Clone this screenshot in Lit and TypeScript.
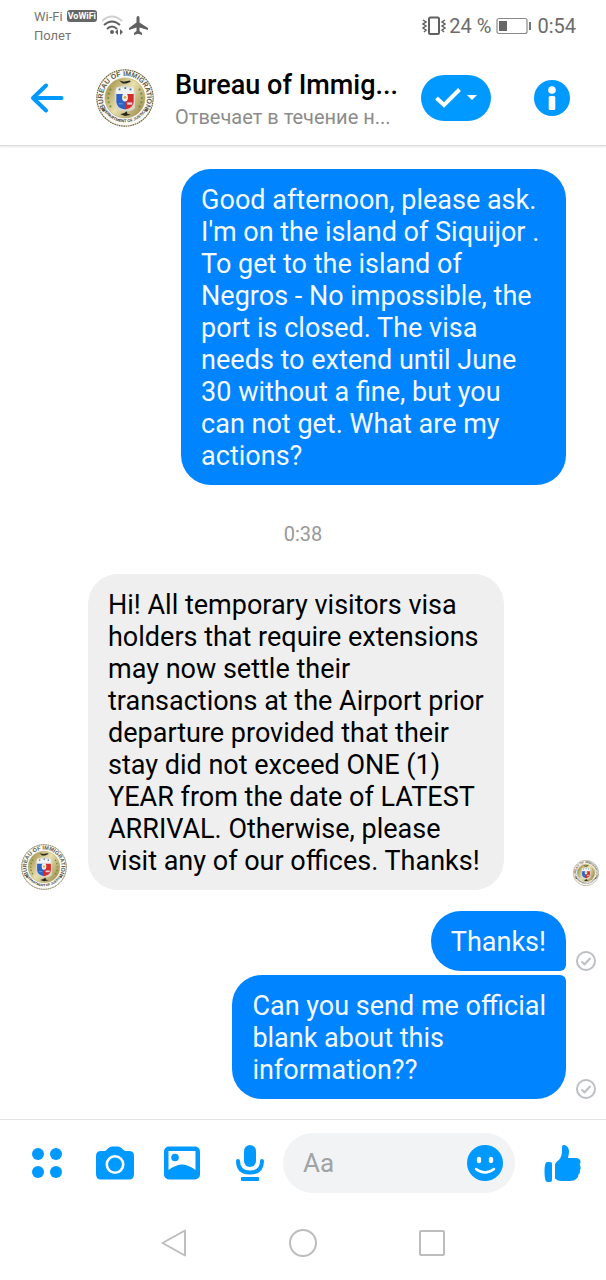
import { LitElement, html, css, svg } from "lit";
import { customElement, property } from "lit/decorators.js";

@customElement("bureau-seal")
class BureauSeal extends LitElement {
  static styles = css`
    :host { display: block; flex: none; }
    svg { display: block; width: 100%; height: auto; }
    .ring { font: 700 12px "Liberation Sans", sans-serif; fill: #5c594f; }
    .ring-small { font: 700 7px "Liberation Sans", sans-serif; fill: #3c3a34; }
  `;

  render() {
    const laurel = [150, 165, 180, 195, 210, 330, 345, 0, 15, 30];
    return html`<svg viewBox="0 0 100 100" role="img" aria-label="Bureau of Immigration seal">
      <defs>
        <linearGradient id="gold" x1="0" y1="0.2" x2="1" y2="0.9">
          <stop offset="0" stop-color="#a39149" />
          <stop offset="0.45" stop-color="#e9e0ae" />
          <stop offset="1" stop-color="#968648" />
        </linearGradient>
        <path id="upper" d="M15.500 66 A38 38 0 1 1 84.500 66" />
        <path id="lower" d="M10.500 66 A43 43 0 0 0 89.500 66" />
      </defs>
      <circle cx="50" cy="50" r="48.500" fill="#fbfaf4" stroke="#6b6237" stroke-width="2" stroke-dasharray="3 1" />
      <circle cx="50" cy="50" r="34.500" fill="url(#gold)" stroke="#b7aa6b" />
      <text class="ring"><textPath href="#upper" startOffset="50%" text-anchor="middle">BUREAU OF IMMIGRATION</textPath></text>
      <text class="ring-small"><textPath href="#lower" startOffset="50%" text-anchor="middle">DEPARTMENT OF JUSTICE</textPath></text>
      <circle cx="13" cy="71" r="2.500" fill="#55524a" />
      <circle cx="87" cy="71" r="2.500" fill="#55524a" />
      ${laurel.map((a) => {
        const r = (a * Math.PI) / 180;
        return svg`<circle cx=${50 + 29 * Math.cos(r)} cy=${50 + 29 * Math.sin(r)} r="1.800" fill="#6f8f3a" />`;
      })}
      <path d="M32 38 L38 31 L50 27 L62 31 L68 38 L67 68 L58 73 H42 L33 68 Z" fill="#d9d8c4" />
      <path d="M35 32 H65 V56 Q65 67 50 70 Q35 67 35 56 Z" fill="#f1f2f2" />
      <path d="M35 43 H50 V70 Q35 67 35 56 Z" fill="#2b62c4" />
      <path d="M50 43 H65 V56 Q65 67 50 70 Z" fill="#d62b2b" />
      <ellipse cx="50" cy="49" rx="5" ry="7" fill="#eef2f8" />
      <circle cx="50" cy="49" r="2.500" fill="#d8b52f" />
      <path d="M39 35 h3 M49 33 h3 M58 35 h3" stroke="#4a6a9a" stroke-width="3" />
      <path d="M54 58 h8 v3 h-8 Z M39 60 h7" fill="#f4d9d9" stroke="#b9c8ea" />
      <path d="M40 20 L48 22 L58 20 L60 22 L52 25 L46 25 Z" fill="#26251f" />
      <path d="M42 78 L49 76 L53 73 L54 77 L60 79 L50 81 Z" fill="#26251f" />
    </svg>`;
  }
}

@customElement("chat-message")
class ChatMessage extends LitElement {
  @property() text = "";
  @property() side: "in" | "out" = "out";
  @property() status: "none" | "sent" | "seen" = "none";
  @property() join: "none" | "top" | "bottom" = "none";

  static styles = css`
    :host { display: grid; grid-template-columns: 88px minmax(0, 1fr) 40px; align-items: end; }
    .bubble {
      box-sizing: border-box; margin: 0; padding: 15px 20px 13px; border-radius: 30px;
      font-size: 27px; line-height: 32px; white-space: pre-line; max-width: 100%;
    }
    .out { justify-self: end; background: #0084ff; color: #f4faff; }
    .in { justify-self: start; background: #efefef; color: #000; }
    .join-bottom { border-bottom-right-radius: 6px; }
    .join-top { border-top-right-radius: 6px; }
    .sender { width: 46px; margin-left: 21px; }
    .mark { justify-self: center; }
    .seen { width: 26px; margin-bottom: 4px; }
    svg { display: block; }
  `;

  render() {
    return html`
      <div>${this.side === "in" ? html`<bureau-seal class="sender"></bureau-seal>` : ""}</div>
      <p class="bubble ${this.side} join-${this.join}">${this.text}</p>
      <div class="mark">
        ${this.status === "seen" ? html`<bureau-seal class="seen"></bureau-seal>` : ""}
        ${this.status === "sent"
          ? html`<svg width="20" height="20" viewBox="0 0 20 20" fill="none" stroke="#bcc0c4" stroke-width="2" role="img" aria-label="Sent">
              <circle cx="10" cy="10" r="9" /><path d="M5.500 10.500 L8.500 13.300 L14.500 7" />
            </svg>`
          : ""}
      </div>`;
  }
}

@customElement("app-root")
class AppRoot extends LitElement {
  static styles = css`
    :host {
      display: flex; flex-direction: column; min-height: 100vh; background: #fff;
      font-family: Roboto, "Noto Sans", sans-serif; color: #000;
    }
    svg { display: block; flex: none; }
    button { display: block; flex: none; padding: 0; border: 0; background: none; color: #0099ff; cursor: pointer; }

    .status { display: flex; justify-content: space-between; align-items: center; height: 51px; padding: 0 30px 0 34px; color: #6b6b6b; }
    .status-left, .status-right { display: flex; align-items: center; }
    .carrier { font-size: 13px; line-height: 19px; padding-right: 5px; color: #757575; }
    .network { display: flex; align-items: center; gap: 4px; }
    .vowifi { background: #666; color: #fff; border-radius: 3px; font-size: 9px; line-height: 12px; font-weight: 700; padding: 0 1px; }
    .status-right { font-size: 20px; gap: 5px; color: #6b6b6b; }
    .vibrate { margin-right: -2px; }

    .head { display: flex; align-items: center; height: 94px; padding: 0 36px 0 30px; border-bottom: 1px solid #dcdcdc; box-shadow: 0 1px 2px #e6e6e6; }
    .head-seal { width: 58px; margin: 0 21px 0 32px; }
    .who { flex: 1; min-width: 0; padding-top: 4px; }
    .name { margin: 0; font-size: 27px; line-height: 34px; font-weight: 500; white-space: nowrap; }
    .reply { margin: 0; font-size: 20px; line-height: 30px; color: #8c8c8c; white-space: nowrap; }
    .done { display: flex; align-items: center; justify-content: center; gap: 6px; width: 70px; height: 46px; border-radius: 23px; background: #0099ff; color: #fff; margin-right: 43px; }

    .thread { flex: 1; display: flex; flex-direction: column; padding: 23px 0 20px; }
    .time { margin: 37px 0 28px; text-align: center; font-size: 20px; line-height: 24px; color: #999; }
    .group { display: flex; flex-direction: column; gap: 4px; margin-top: 21px; }

    .composer { display: flex; align-items: center; padding: 13px 24px 13px 28px; border-top: 1px solid #e4e4e4; }
    .tools { display: flex; align-items: center; justify-content: space-between; flex: 0 0 241px; }
    .tools button { display: flex; justify-content: center; width: 38px; }
    .field { display: flex; align-items: center; flex: 1; min-width: 0; box-sizing: border-box; height: 60px; margin: 0 29px 0 14px; padding: 0 12px 0 20px; border-radius: 30px; background: #f1f3f5; }
    .field input { flex: 1; min-width: 0; height: 40px; border: 0; padding: 0; outline: 0; background: none; font: 26px/32px Roboto, sans-serif; color: #000; }
    .field input::placeholder { color: #a0a2a4; opacity: 1; }

    .nav { display: flex; justify-content: center; align-items: center; gap: 102px; height: 74px; }
  `;

  render() {
    return html`
      <div class="status">
        <div class="status-left">
          <div class="carrier">
            <div class="network">Wi-Fi <span class="vowifi">VoWiFi</span></div>
            <div>Полет</div>
          </div>
          <svg width="46" height="22" viewBox="0 0 46 22" fill="none">
            <path d="M0 6 Q10 -3 20 6" stroke="#cfcfcf" stroke-width="2" />
            <path d="M2 10 Q10 3 18 10 M5 14 Q10 9 15 14" stroke="#606060" stroke-width="2" />
            <circle cx="10" cy="17" r="2" fill="#606060" />
            <path d="M13 17 L16 14 V20 Z M21 17 L18 14 V20 Z" fill="#606060" />
            <path d="M36 1 Q37.500 1 37.500 3 V7.500 L46 13 V15 L37.500 12.500 V16 L40 18 V20 L36 18.700 L32 20 V18 L34.500 16 V12.500 L27 15 V13 L34.500 7.500 V3 Q34.500 1 36 1 Z" fill="#606060" />
          </svg>
        </div>
        <div class="status-right">
          <svg class="vibrate" width="24" height="20" viewBox="0 0 24 20" fill="none" stroke="#606060">
            <rect x="7" y="1.500" width="10" height="16.500" rx="1.500" stroke-width="2" />
            <path d="M1 4 L4 6 L1 8 L4 10 L1 12 L4 14 L2 16 M23 4 L20 6 L23 8 L20 10 L23 12 L20 14 L22 16" stroke-width="1.500" />
          </svg>
          <span>24 %</span>
          <svg width="36" height="18" viewBox="0 0 36 18">
            <rect x="1" y="1.500" width="30" height="15" rx="2" fill="none" stroke="#8a8a8a" stroke-width="1.200" />
            <rect x="3" y="4" width="8" height="10" fill="#666" />
            <rect x="33" y="5" width="2" height="8" fill="#777" />
          </svg>
          <span>0:54</span>
        </div>
      </div>

      <header class="head">
        <button aria-label="Back">
          <svg width="34" height="32" viewBox="0 0 34 32" fill="none" stroke="#0099ff" stroke-width="4" stroke-linecap="round" stroke-linejoin="round">
            <path d="M31.500 16 H3 M16 3.500 L3 16 L16 28.500" />
          </svg>
        </button>
        <bureau-seal class="head-seal"></bureau-seal>
        <div class="who">
          <h1 class="name">Bureau of Immig...</h1>
          <p class="reply">Отвечает в течение н...</p>
        </div>
        <button class="done" aria-label="Mark as done">
          <svg width="26" height="20" viewBox="0 0 26 20" fill="none" stroke="#fff" stroke-width="4">
            <path d="M1.500 10 L9 17 L24.500 1.500" />
          </svg>
          <svg width="10" height="6" viewBox="0 0 10 6"><path d="M0 0 H10 L5 5 Z" fill="#fff" /></svg>
        </button>
        <button aria-label="Information">
          <svg width="36" height="36" viewBox="0 0 36 36">
            <circle cx="18" cy="18" r="18" fill="#0099ff" />
            <circle cx="18" cy="10" r="3.800" fill="#fff" />
            <rect x="14.700" y="16" width="6.600" height="14" rx="1.500" fill="#fff" />
          </svg>
        </button>
      </header>

      <main class="thread">
        <chat-message
          .text=${"Good afternoon, please ask.\nI'm on the island of Siquijor .\u00a0\nTo get to the island of\nNegros - No impossible, the\nport is closed. The visa\nneeds to extend until June\n30 without a fine, but you\ncan not get. What are my\nactions?"}
        ></chat-message>
        <p class="time">0:38</p>
        <chat-message
          side="in"
          status="seen"
          .text=${"Hi! All temporary visitors visa\nholders that require extensions\nmay now settle their\ntransactions at the Airport prior\ndeparture provided that their\nstay did not exceed ONE (1)\nYEAR from the date of LATEST\nARRIVAL. Otherwise, please\nvisit any of our offices. Thanks!"}
        ></chat-message>
        <div class="group">
          <chat-message status="sent" join="bottom" .text=${"Thanks!"}></chat-message>
          <chat-message status="sent" join="top" .text=${"Can you send me official\nblank about this\ninformation??"}></chat-message>
        </div>
      </main>

      <footer>
        <div class="composer">
          <div class="tools">
            <button aria-label="More">
              <svg width="30" height="30" viewBox="0 0 30 30" fill="#0099ff">
                <circle cx="6" cy="6" r="6" /><circle cx="24" cy="6" r="6" /><circle cx="6" cy="24" r="6" /><circle cx="24" cy="24" r="6" />
              </svg>
            </button>
            <button aria-label="Camera">
              <svg width="38" height="34" viewBox="0 0 38 34">
                <path d="M5 5 H8 Q9.500 5 10.500 4 L12.500 2 Q14 0.500 16 0.500 H22 Q24 0.500 25.500 2 L27.500 4 Q28.500 5 30 5 H33 Q38 5 38 10 V28 Q38 33.500 33 33.500 H5 Q0 33.500 0 28 V10 Q0 5 5 5 Z" fill="#0099ff" />
                <circle cx="19" cy="18.500" r="8.200" fill="#0099ff" stroke="#fff" stroke-width="2.600" />
              </svg>
            </button>
            <button aria-label="Gallery">
              <svg width="36" height="34" viewBox="0 0 36 34">
                <rect y="0.500" width="36" height="33" rx="5" fill="#0099ff" />
                <path d="M4.500 5 H31.500 V24 Q24 18.500 18 18.500 Q12 18.500 4.500 24 Z" fill="#fff" />
                <circle cx="11" cy="11.500" r="3.800" fill="#0099ff" />
              </svg>
            </button>
            <button aria-label="Voice message">
              <svg width="28" height="36" viewBox="0 0 28 36">
                <rect x="8" width="12" height="22" rx="6" fill="#0099ff" />
                <path d="M2 16 Q2 27.500 14 27.500 Q26 27.500 26 16" fill="none" stroke="#0099ff" stroke-width="4" stroke-linecap="round" />
                <rect x="5" y="32" width="18" height="4" rx="1" fill="#0099ff" />
              </svg>
            </button>
          </div>
          <div class="field">
            <input type="text" aria-label="Message" placeholder="Aa" />
            <button aria-label="Emoji">
              <svg width="36" height="36" viewBox="0 0 36 36">
                <circle cx="18" cy="18" r="18" fill="#0099ff" />
                <ellipse cx="12" cy="15" rx="2.200" ry="3.200" fill="#fff" /><ellipse cx="24" cy="15" rx="2.200" ry="3.200" fill="#fff" />
                <path d="M9 24 Q18 31 27 24" fill="none" stroke="#fff" stroke-width="2.400" stroke-linecap="round" />
              </svg>
            </button>
          </div>
          <button aria-label="Like">
            <svg width="38" height="38" viewBox="0 0 38 38" fill="#0099ff">
              <path d="M3 18 H6.500 Q8 18 8 20 V36 Q8 38 6 38 H3.500 Q0.500 38 0.500 28 Q0.500 18 3 18 Z" />
              <path d="M11 21 Q11 18.500 13 17.500 Q17.500 14.500 18 8 V3 Q18 0.500 20.500 1 Q24.500 2 25 7 Q25 10 24 14 H32.500 Q36.500 14.500 36.500 18 Q36.500 19.500 35.500 20.500 Q37.500 23 36 26 Q36.500 29 34.500 30.500 Q34.500 33.500 32.500 34.500 Q30.500 37 25.500 37 H17.500 Q13.500 37 11 34.500 Z" />
            </svg>
          </button>
        </div>
        <nav class="nav" aria-label="System">
          <button aria-label="System back">
            <svg width="26" height="28" viewBox="0 0 26 28" fill="none" stroke="#bdbdbd" stroke-width="2" stroke-linejoin="round"><path d="M24 1.500 V26.500 L1.500 14 Z" /></svg>
          </button>
          <button aria-label="Home">
            <svg width="28" height="28" viewBox="0 0 28 28" fill="none" stroke="#bdbdbd" stroke-width="2"><circle cx="14" cy="14" r="13" /></svg>
          </button>
          <button aria-label="Recent apps">
            <svg width="26" height="26" viewBox="0 0 26 26" fill="none" stroke="#bdbdbd" stroke-width="2"><rect x="1" y="1" width="24" height="24" rx="1" /></svg>
          </button>
        </nav>
      </footer>
    `;
  }
}
